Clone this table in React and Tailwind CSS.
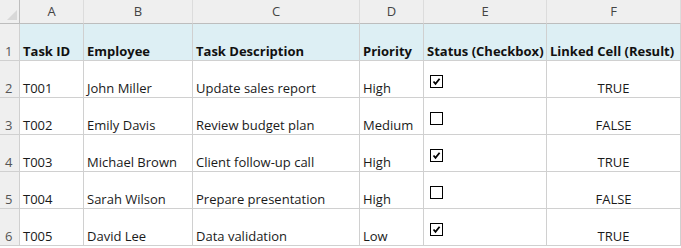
import React from 'react';

const cols = ['A', 'B', 'C', 'D', 'E', 'F'];

const headers = ['Task ID', 'Employee', 'Task Description', 'Priority', 'Status (Checkbox)', 'Linked Cell (Result)'];

const rows = [
    { id: 'T001', name: 'John Miller', task: 'Update sales report', priority: 'High', done: true },
    { id: 'T002', name: 'Emily Davis', task: 'Review budget plan', priority: 'Medium', done: false },
    { id: 'T003', name: 'Michael Brown', task: 'Client follow-up call', priority: 'High', done: true },
    { id: 'T004', name: 'Sarah Wilson', task: 'Prepare presentation', priority: 'High', done: false },
    { id: 'T005', name: 'David Lee', task: 'Data validation', priority: 'Low', done: true },
];

const CheckBox = ({ checked }) => (
    <div className="w-[13px] h-[13px] border border-black bg-white flex items-center justify-center">
        {checked && (
            <svg width="9" height="9" viewBox="0 0 9 9">
                <path d="M1.5 4.5 L3.5 6.8 L7.6 1.8" fill="none" stroke="black" strokeWidth="1.8" />
            </svg>
        )}
    </div>
);

// cells sit on the bottom edge like Excel
const cell = 'border-r border-b border-[#d0d0d0] flex items-end px-[3px] pb-[1px] leading-[15px] overflow-hidden whitespace-nowrap';

export default function App() {
    return (
        <div className="w-[681px] h-[248px] bg-white overflow-hidden text-[13px] text-[#1a1a1a]" style={{ fontFamily: '"Open Sans", "Noto Sans", sans-serif' }}>
            <div className="grid grid-cols-[20px_64px_109px_167px_64px_123px_134px] grid-rows-[24px_37px_37px_37px_37px_37px_37px]">
                {/* corner */}
                <div className="relative bg-[#efefef] border-b border-r border-[#bdbdbd]">
                    <div className="absolute right-[2px] bottom-[3px] w-0 h-0 border-l-[10px] border-l-transparent border-b-[10px] border-b-[#d8d8d8]" />
                </div>
                {cols.map(c => (
                    <div key={c} className="bg-[#efefef] border-b border-[#bdbdbd] border-r border-r-[#dcdcdc] flex items-center justify-center text-[#444] text-[13px]">
                        {c}
                    </div>
                ))}

                {/* header row */}
                <div className="bg-[#efefef] border-r border-b border-[#d0d0d0] flex items-end pl-[5px] pb-[1px] leading-[15px] text-[#555]">1</div>
                {headers.map(h => (
                    <div key={h} className={`${cell} bg-[#ddeff4] font-bold text-[#111]`}>{h}</div>
                ))}

                {rows.map((r, i) => (
                    <React.Fragment key={r.id}>
                        <div className="bg-[#efefef] border-r border-b border-[#d0d0d0] flex items-end pl-[5px] pb-[1px] leading-[15px] text-[#555]">{i + 2}</div>
                        <div className={cell}>{r.id}</div>
                        <div className={cell}>{r.name}</div>
                        <div className={cell}>{r.task}</div>
                        <div className={cell}>{r.priority}</div>
                        <div className="border-r border-b border-[#d0d0d0] pl-[6px] pt-[14px]">
                            <CheckBox checked={r.done} />
                        </div>
                        <div className={`${cell} justify-center`}>{r.done ? 'TRUE' : 'FALSE'}</div>
                    </React.Fragment>
                ))}
            </div>
        </div>
    );
}
